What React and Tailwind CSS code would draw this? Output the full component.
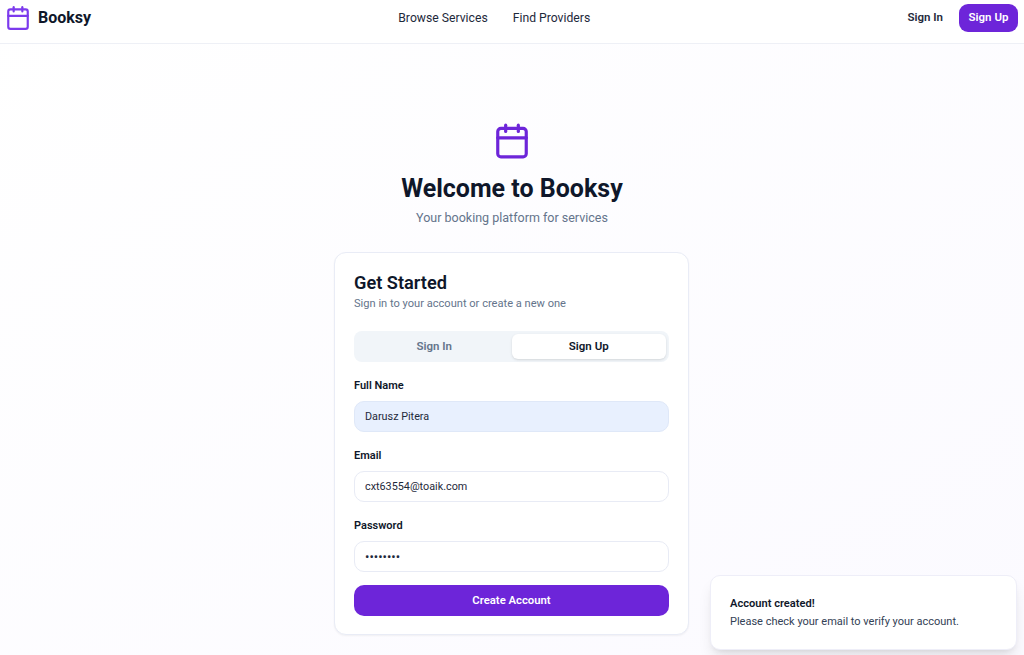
import React from "react";
import { Calendar } from "lucide-react";

function Field({ label, value, filled, dots }) {
  return (
    <div className="flex flex-col">
      <div className="text-[11px] leading-[14px] font-semibold text-[#0f172a] mb-[8px]">{label}</div>
      <div className={`h-[31px] rounded-[10px] border px-[10px] pt-[1px] flex items-center text-[#1e293b] ${dots ? "text-[13px] tracking-[0px]" : "text-[10.8px]"} ${filled ? "bg-[#e8f0fe] border-[#dfe8f8]" : "bg-white border-[#e8ebf5]"}`}>
        {value}
      </div>
    </div>
  );
}

export default function App() {
  return (
    <div className="relative h-[655px] w-[1024px] overflow-hidden bg-gradient-to-br from-white to-[#fbfaff] font-['Roboto',sans-serif] text-[#0f172a]">
      <header className="h-[44px] bg-white border-b border-[#eef0f6] flex items-start justify-between pl-[5px] pr-[6px] pt-[4px]">
        <div className="flex items-center gap-[7px] h-[28px]">
          <Calendar size={26} strokeWidth={2} className="text-[#7c3aed]" />
          <span className="text-[16px] font-bold">Booksy</span>
        </div>
        <nav className="flex items-center h-[28px] gap-[25px] text-[12.2px] text-[#1e293b] mr-[10px]">
          <span>Browse Services</span>
          <span>Find Providers</span>
        </nav>
        <div className="flex items-center justify-end h-[28px] gap-[16px]">
          <span className="text-[11.5px] font-semibold text-[#1e293b]">Sign In</span>
          <div className="h-[28px] w-[59px] rounded-[9px] bg-[#6d25d9] text-white text-[11.5px] font-semibold flex items-center justify-center">Sign Up</div>
        </div>
      </header>
      <main className="flex flex-col items-center pt-[78px]">
        <Calendar size={38} strokeWidth={2} className="text-[#6d25d9]" />
        <h1 className="mt-[13px] text-[25px] leading-[32px] font-bold">Welcome to Booksy</h1>
        <p className="mt-[4px] text-[12.5px] leading-[18px] text-[#64748b]">Your booking platform for services</p>
        <div className="mt-[25px] mr-[1px] w-[355px] h-[383px] rounded-[12px] bg-white border border-[#e9ecf6] shadow-[0_1px_2px_rgba(0,0,0,0.05)] px-[19px] pt-[19px]">
          <h2 className="text-[18.2px] leading-[22px] font-semibold">Get Started</h2>
          <p className="mt-[2px] text-[11.1px] leading-[15px] text-[#64748b]">Sign in to your account or create a new one</p>
          <div className="mt-[20px] h-[31px] rounded-[8px] bg-[#f1f5f9] p-[3px] grid grid-cols-2 text-[11.5px] font-semibold">
            <div className="flex items-center justify-center text-[#64748b]">Sign In</div>
            <div className="flex items-center justify-center bg-white rounded-[6px] shadow-sm">Sign Up</div>
          </div>
          <div className="mt-[17px] flex flex-col gap-[17px]">
            <Field label="Full Name" value="Darusz Pitera" filled />
            <Field label="Email" value="cxt63554@toaik.com" />
            <Field label="Password" value="••••••••" dots />
          </div>
          <div className="mt-[13px] h-[31px] rounded-[10px] bg-[#6d25d9] pt-[1px] text-white text-[11.3px] font-semibold flex items-center justify-center">Create Account</div>
        </div>
      </main>
      <div className="absolute left-[710px] top-[575px] w-[307px] h-[75px] rounded-[10px] bg-white border border-[#eeeef8] shadow-lg px-[19px] flex flex-col justify-center gap-[3px]">
        <div className="text-[11.1px] leading-[15px] font-semibold">Account created!</div>
        <div className="text-[11px] leading-[15px] text-[#334155]">Please check your email to verify your account.</div>
      </div>
    </div>
  );
}
